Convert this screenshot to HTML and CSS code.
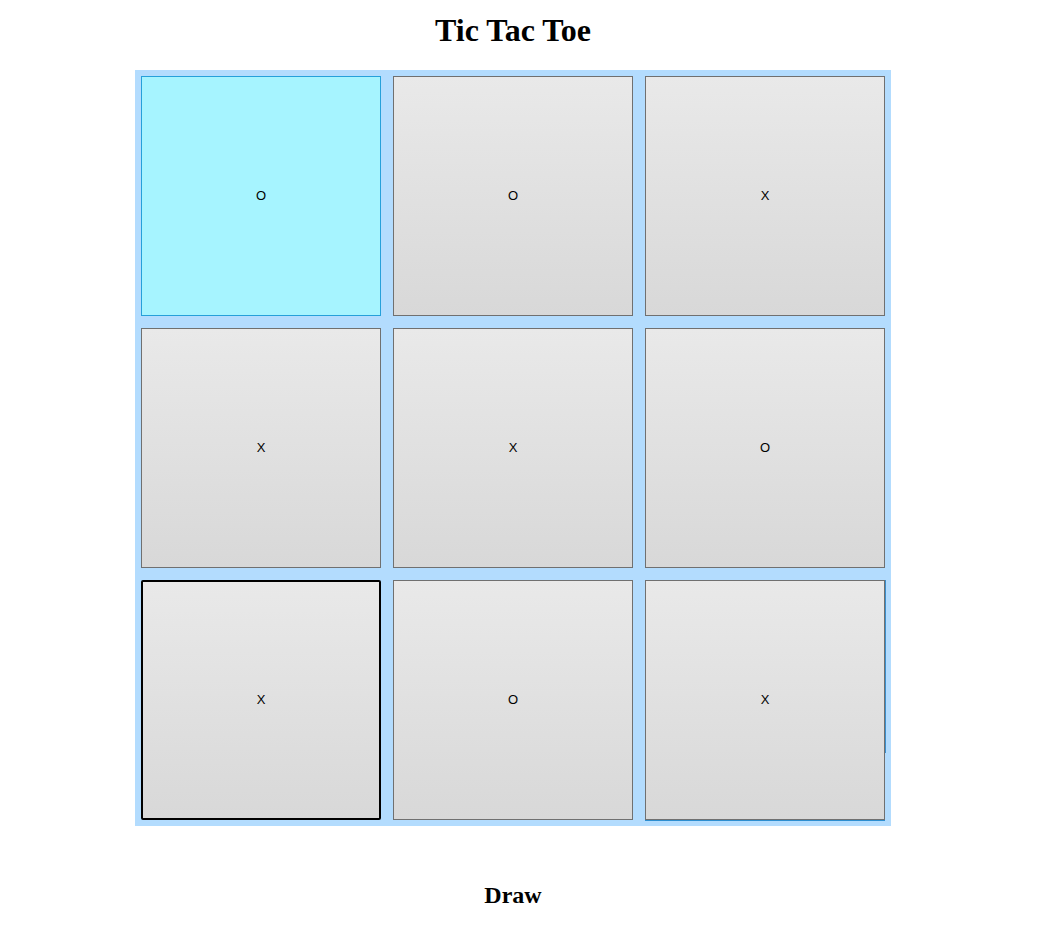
FILE: index.html
```html
<!DOCTYPE html>
<html>
<head>
<meta charset="utf-8">
<title>Tic Tac Toe</title>
<link rel="stylesheet" href="styles.css">
</head>
<body>
<div class="page">
  <h1 class="title">Tic Tac Toe</h1>
  <div class="board">
    <button class="cell hover">O</button>
    <button class="cell">O</button>
    <button class="cell">X</button>
    <button class="cell">X</button>
    <button class="cell">X</button>
    <button class="cell">O</button>
    <button class="cell focus">X</button>
    <button class="cell">O</button>
    <button class="cell fading">X</button>
  </div>
  <h2 class="status">Draw</h2>
</div>
</body>
</html>
```
FILE: styles.css
```css
html, body {
  margin: 0;
  padding: 0;
  background: #ffffff;
}
.page {
  width: 1026px;
  font-family: "Liberation Serif", "Times New Roman", serif;
  text-align: center;
}
.title {
  font-size: 32px;
  font-weight: bold;
  margin: 12px 0 21px;
  line-height: 37px;
}
.board {
  width: 756px;
  height: 756px;
  margin: 0 auto;
  background: #b3dcfe;
  display: grid;
  grid-template-columns: repeat(3, 240px);
  grid-template-rows: repeat(3, 240px);
  gap: 12px;
  padding: 6px;
  box-sizing: border-box;
}
.cell {
  position: relative;
  width: 240px;
  height: 240px;
  margin: 0;
  padding: 0 0 2px;
  box-sizing: border-box;
  border: 1px solid #707070;
  border-radius: 0;
  background: linear-gradient(to bottom, #e9e9e9, #d8d8d8);
  font-family: "Liberation Sans", Arial, sans-serif;
  font-size: 13px;
  color: #000;
}
.cell.hover {
  background: #a6f4ff;
  border-color: #26a0da;
}
.cell.focus {
  border: 2px solid #000;
  border-radius: 2px;
}
.cell.fading::after {
  content: "";
  position: absolute;
  right: -2px;
  top: -1px;
  width: 1px;
  height: 173px;
  background: #3c8fcb;
}
.cell.fading::before {
  content: "";
  position: absolute;
  left: -1px;
  right: -1px;
  bottom: -2px;
  height: 1px;
  background: #2d8ed0;
}
.status {
  font-size: 24px;
  font-weight: bold;
  margin: 55px 0 20px;
  line-height: 28px;
}
```
